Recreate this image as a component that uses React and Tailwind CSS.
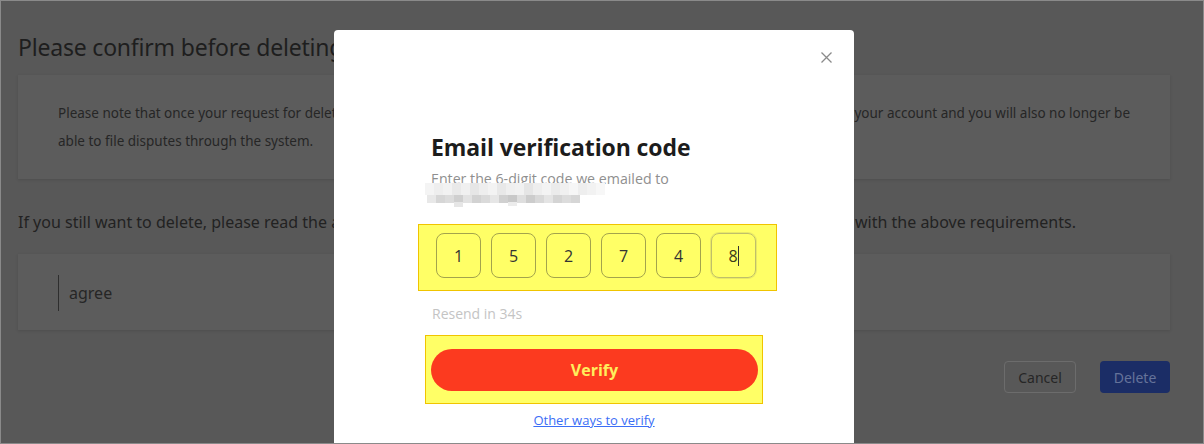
import React from "react";

const blurTop = ["#f4f4f4","#eeeeee","#f2f2f2","#e9e9e9","#f0f0f0","#e6e6e6","#eeeeee","#f3f3f3","#e8e8e8","#efefef","#f1f1f1","#e5e5e5","#eeeeee","#f3f3f3","#ebebeb","#f0f0f0","#f6f6f6","#eeeeee","#f2f2f2","#f7f7f7"];
const blurBot = ["#e8e8e8","#d6d6d6","#dcdcdc","#cfcfcf","#e2e2e2","#d2d2d2","#dadada","#e6e6e6","#d0d0d0","#c8c8c8","#dedede","#cccccc","#d8d8d8","#e4e4e4","#d4d4d4","#dcdcdc","#d6d6d6","#e2e2e2","#f0f0f0","#fafafa"];

function Blur() {
  return (
    <svg width="184" height="24" viewBox="0 0 184 24" className="absolute left-[91px] top-[153px]">
      {blurTop.map((c, i) => (
        <rect key={"t" + i} x={i * 9} y={0} width={9} height={12} fill={c} />
      ))}
      {blurBot.slice(0, 17).map((c, i) => (
        <rect key={"b" + i} x={i * 9 + 2} y={12} width={9} height={8} fill={c} />
      ))}
      <rect x={29} y={19} width={9} height={5} fill="#e6e6e6" />
      <rect x={83} y={19} width={9} height={4} fill="#ececec" />
    </svg>
  );
}

export default function App() {
  const digits = ["1", "5", "2", "7", "4", "8"];
  return (
    <div
      className="w-[1204px] h-[444px] relative overflow-hidden border border-[#8a8a8a] bg-[#585858]"
      style={{ fontFamily: '"Noto Sans", "Open Sans", sans-serif' }}
    >
      {/* page beneath overlay */}
      <div className="pl-[17px] pr-[33px] pt-[30px]">
        <h1 className="text-[23px] leading-[32px] text-[#1e1e1e] tracking-[-0.2px]">
          Please confirm before deleting your account
        </h1>
        <div className="mt-[12px] bg-[#5c5c5c] shadow-[0_1px_3px_rgba(0,0,0,0.12)] pl-[40px] pr-[40px] py-[24px] text-[13.5px] leading-[28px] text-[#262626]">
          <div className="flex justify-between whitespace-nowrap">
            <span>Please note that once your request for deletion is approved, you will not be able to</span>
            <span>your account and you will also no longer be</span>
          </div>
          <div>able to file disputes through the system.</div>
        </div>
        <p className="mt-[31px] flex text-[16px] leading-[24px] text-[#222] whitespace-nowrap">
          <span className="w-[837px] shrink-0 overflow-hidden">
            If you still want to delete, please read the above content carefully and confirm that you comply
          </span>
          <span>with the above requirements.</span>
        </p>
        <div className="mt-[20px] h-[76px] bg-[#5c5c5c] shadow-[0_1px_3px_rgba(0,0,0,0.12)] pl-[40px] pt-[21px]">
          <div className="flex items-center h-[36px]">
            <div className="w-px h-[36px] bg-[#2e2e2e]" />
            <span className="ml-[10px] text-[16px] text-[#262626]">agree</span>
          </div>
        </div>
        <div className="mt-[31px] flex justify-end gap-[24px]">
          <div className="w-[72px] h-[32px] rounded-[4px] border border-[#6c6c6c] flex items-center justify-center text-[14px] text-[#262626]">
            Cancel
          </div>
          <div className="w-[70px] h-[32px] rounded-[4px] bg-[#1b2d66] flex items-center justify-center text-[14px] text-[#65739a]">
            Delete
          </div>
        </div>
      </div>

      {/* modal */}
      <div
        className="absolute left-[333px] top-[29px] w-[520px] h-[430px] bg-white rounded-t-[4px]"
        style={{ fontFamily: '"Open Sans", "Noto Sans", sans-serif' }}
      >
        <svg
          width="11"
          height="11"
          viewBox="0 0 11 11"
          className="absolute left-[487px] top-[22px]"
        >
          <path d="M0.5 0.5 L10.5 10.5 M10.5 0.5 L0.5 10.5" stroke="#8a8a8a" strokeWidth="1.3" />
        </svg>
        <Blur />
        <div className="pl-[97px] pt-[102px] w-[423px]">
          <h2 className="text-[23px] leading-[30px] font-bold text-[#1c1c1c] tracking-[-0.1px]">
            Email verification code
          </h2>
          <p className="mt-[7px] text-[14.2px] leading-[20px] text-[#8f8f8f]">
            Enter the 6-digit code we emailed to
          </p>
          <div className="mt-[35px] ml-[-13px] w-[359px] h-[67px] border border-[#f0c400] bg-[#ffff66] pl-[17px] pt-[8px] flex gap-[10px]">
            {digits.map((d, i) => (
              <div
                key={i}
                className={
                  i === 5
                    ? "w-[45px] h-[45px] rounded-[8px] border border-[#bfbf6a] shadow-[0_0_0_1px_rgba(190,190,100,0.35)] flex items-center justify-center text-[16px] text-[#3a3a1a]"
                    : "w-[45px] h-[45px] rounded-[8px] border border-[#a3a34c] flex items-center justify-center text-[16px] text-[#333]"
                }
              >
                <span>{d}</span>
                {i === 5 && <span className="w-px h-[20px] bg-[#333]" />}
              </div>
            ))}
          </div>
          <p className="mt-[13px] ml-[1px] text-[14px] leading-[20px] text-[#c4c4c4]">Resend in 34s</p>
          <div className="mt-[11px] ml-[-6px] w-[338px] h-[69px] border border-[#f0c400] bg-[#ffff66] pt-[13px] pl-[5px]">
            <div className="w-[327px] h-[42px] rounded-full bg-[#fc3a1f] flex items-center justify-center text-[16px] font-bold text-[#ffee5c]">
              Verify
            </div>
          </div>
          <div className="mt-[7px] w-[326px] text-center text-[13px] leading-[18px]">
            <span className="text-[#3b6ef6] underline">Other ways to verify</span>
          </div>
        </div>
      </div>
    </div>
  );
}
